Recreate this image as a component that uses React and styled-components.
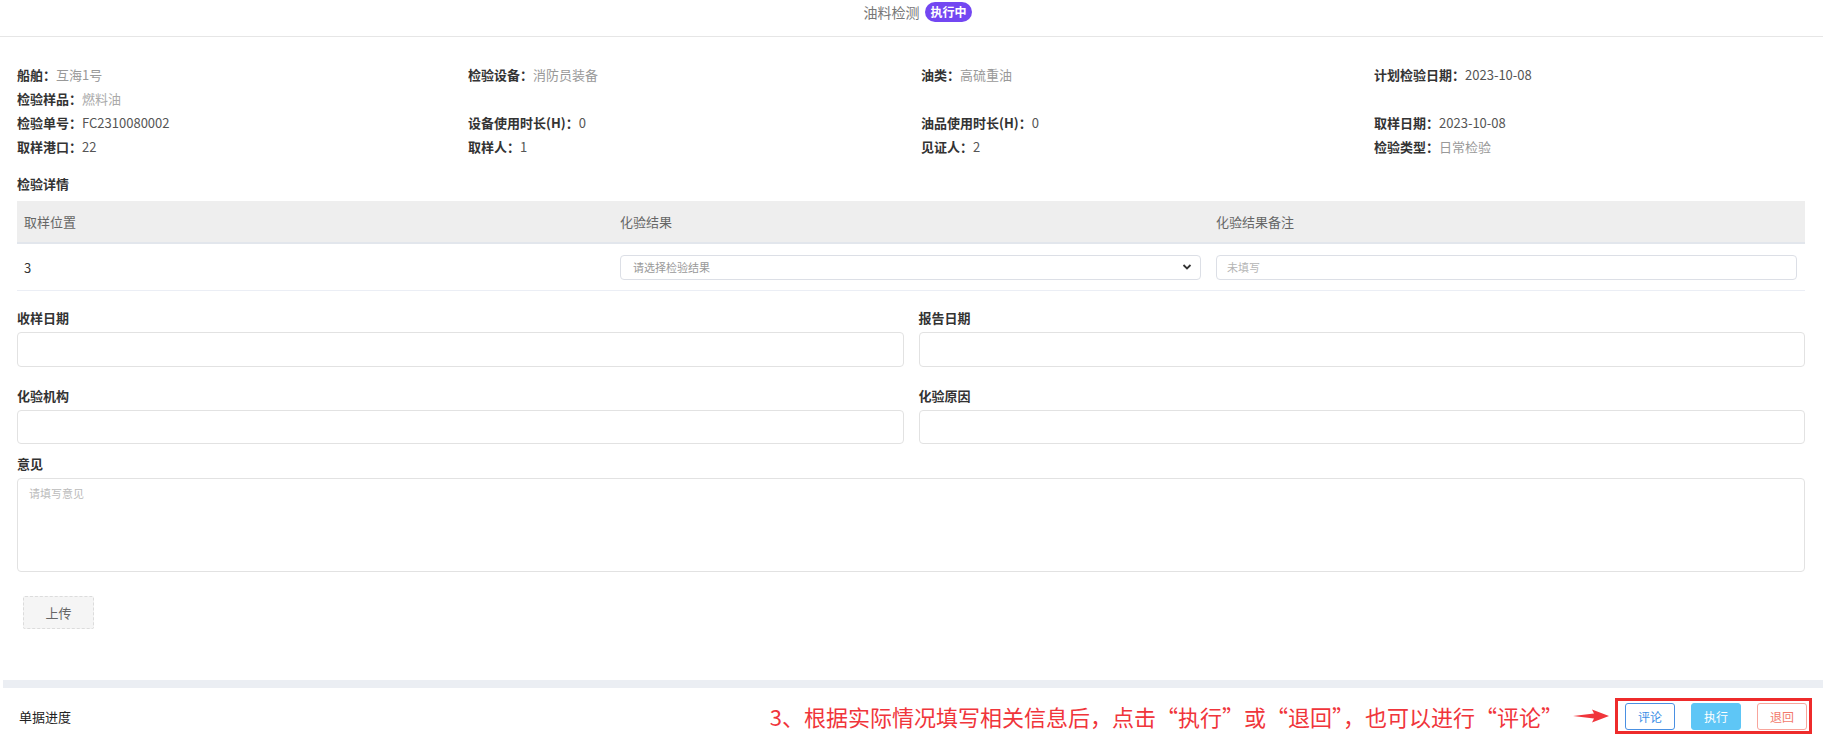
import React from 'react';
import styled, { createGlobalStyle } from 'styled-components';

const GlobalStyle = createGlobalStyle`
  html, body {
    margin: 0;
    padding: 0;
    background: #fff;
    font-family: "Noto Sans CJK SC", "Noto Sans", "Liberation Sans", sans-serif;
  }
`;

const infoRows = [
  [
    { label: '船舶', value: '互海1号', tone: 'muted' },
    { label: '检验设备', value: '消防员装备', tone: 'muted' },
    { label: '油类', value: '高硫重油', tone: 'muted' },
    { label: '计划检验日期', value: '2023-10-08', tone: 'dark' }
  ],
  [{ label: '检验样品', value: '燃料油', tone: 'light' }],
  [
    { label: '检验单号', value: 'FC2310080002', tone: 'dark' },
    { label: '设备使用时长(H)', value: '0', tone: 'dark' },
    { label: '油品使用时长(H)', value: '0', tone: 'dark' },
    { label: '取样日期', value: '2023-10-08', tone: 'dark' }
  ],
  [
    { label: '取样港口', value: '22', tone: 'dark' },
    { label: '取样人', value: '1', tone: 'dark' },
    { label: '见证人', value: '2', tone: 'dark' },
    { label: '检验类型', value: '日常检验', tone: 'muted' }
  ]
];

const toneColors = {
  muted: '#999',
  light: '#aaa',
  dark: '#555'
};

const App = () => {
  return (
    <Page>
      <GlobalStyle />
      <Header>
        <HeaderTitle>油料检测</HeaderTitle>
        <StatusBadge>执行中</StatusBadge>
      </Header>

      <Content>
        <InfoBlock>
          {infoRows.map((row, rIdx) => (
            <InfoRow key={rIdx}>
              {row.map(item => (
                <InfoItem key={item.label}>
                  <InfoLabel>{item.label}：</InfoLabel>
                  <InfoValue tone={item.tone}>{item.value}</InfoValue>
                </InfoItem>
              ))}
            </InfoRow>
          ))}
        </InfoBlock>

        <SectionTitle>检验详情</SectionTitle>
        <Table>
          <HeadCell>取样位置</HeadCell>
          <HeadCell>化验结果</HeadCell>
          <HeadCell>化验结果备注</HeadCell>
          <BodyCell>3</BodyCell>
          <BodyCell>
            <SelectBox>
              <span>请选择检验结果</span>
              <svg width="10" height="10" viewBox="0 0 10 10">
                <path
                  d="M1.5 3 L5 6.5 L8.5 3"
                  fill="none"
                  stroke="#333"
                  strokeWidth="1.8"
                />
              </svg>
            </SelectBox>
          </BodyCell>
          <BodyCell>
            <SmallInput placeholder="未填写" />
          </BodyCell>
        </Table>

        <FormGrid>
          <Field>
            <FieldLabel>收样日期</FieldLabel>
            <FieldInput />
          </Field>
          <Field>
            <FieldLabel>报告日期</FieldLabel>
            <FieldInput />
          </Field>
          <Field>
            <FieldLabel>化验机构</FieldLabel>
            <FieldInput short />
          </Field>
          <Field>
            <FieldLabel>化验原因</FieldLabel>
            <FieldInput short />
          </Field>
        </FormGrid>

        <Field spaced>
          <FieldLabel>意见</FieldLabel>
          <Opinion placeholder="请填写意见" />
        </Field>

        <UploadBtn>上传</UploadBtn>
      </Content>

      <Divider />

      <Footer>
        <FooterTitle>单据进度</FooterTitle>
        <Annotation>
          <NoteText>
            3、根据实际情况填写相关信息后，点击“执行”或“退回”，也可以进行“评论”
          </NoteText>
          <svg width="36" height="16" viewBox="0 0 36 16">
            <polygon
              points="0,8 21,5.5 19,1.5 36,8 19,14.5 21,10.5"
              fill="#f0353b"
            />
          </svg>
          <HighlightBox>
            <ActionBtn kind="comment">评论</ActionBtn>
            <ActionBtn kind="run">执行</ActionBtn>
            <ActionBtn kind="back">退回</ActionBtn>
          </HighlightBox>
        </Annotation>
      </Footer>
    </Page>
  );
};

const Page = styled.div`
  width: 1823px;
  height: 744px;
  overflow: hidden;
  font-size: 13px;
  color: #333;
`;

const Header = styled.div`
  height: 37px;
  border-bottom: 1px solid #e6e6e6;
  display: flex;
  justify-content: center;
  align-items: flex-start;
  padding: 2px 0 0 12px;
  box-sizing: border-box;
  gap: 6px;
`;

const HeaderTitle = styled.span`
  font-size: 14px;
  line-height: 20px;
  color: #777;
`;

const StatusBadge = styled.span`
  height: 20px;
  line-height: 20px;
  padding: 0 5px;
  border-radius: 10px;
  background: #7347f2;
  color: #fff;
  font-size: 12px;
  font-weight: 700;
`;

const Content = styled.div`
  padding: 25px 18px 0 17px;
`;

const InfoBlock = styled.div`
  display: flex;
  flex-direction: column;
`;

const InfoRow = styled.div`
  display: grid;
  grid-template-columns: 451px 453px 453px 1fr;
  height: 24px;
  align-items: center;
`;

const InfoItem = styled.div`
  display: flex;
  align-items: center;
  white-space: nowrap;
`;

const InfoLabel = styled.span`
  font-weight: 700;
  color: #333;
`;

const InfoValue = styled.span`
  color: ${p => toneColors[p.tone]};
`;

const SectionTitle = styled.div`
  margin-top: 14px;
  line-height: 24px;
  font-weight: 700;
`;

const Table = styled.div`
  margin-top: 5px;
  display: grid;
  grid-template-columns: repeat(3, 1fr);
  grid-template-rows: 43px 47px;
`;

const HeadCell = styled.div`
  background: #eeeeee;
  border-bottom: 2px solid #e2e6ec;
  display: flex;
  align-items: center;
  padding: 0 8px 0 7px;
  color: #666;
`;

const BodyCell = styled.div`
  border-bottom: 1px solid #ebeef5;
  display: flex;
  align-items: center;
  padding: 0 8px 0 7px;
  color: #333;
`;

const SelectBox = styled.div`
  flex: 1;
  height: 25px;
  box-sizing: border-box;
  border: 1px solid #dcdfe6;
  border-radius: 4px;
  display: flex;
  align-items: center;
  justify-content: space-between;
  padding: 0 8px 0 12px;
  font-size: 11px;
  color: #999;
`;

const SmallInput = styled.input`
  flex: 1;
  height: 25px;
  box-sizing: border-box;
  border: 1px solid #dcdfe6;
  border-radius: 4px;
  padding: 0 10px;
  font-family: inherit;
  font-size: 11px;
  outline: none;
  &::placeholder {
    color: #b5b5b5;
  }
`;

const FormGrid = styled.div`
  display: grid;
  grid-template-columns: 1fr 1fr;
  column-gap: 15px;
  margin-top: 17px;
  row-gap: 19px;
`;

const Field = styled.div`
  display: flex;
  flex-direction: column;
  gap: 4px;
  margin-top: ${p => (p.spaced ? '10px' : '0')};
`;

const FieldLabel = styled.div`
  line-height: 20px;
  font-weight: 700;
  color: #333;
`;

const FieldInput = styled.div`
  height: ${p => (p.short ? '34px' : '35px')};
  box-sizing: border-box;
  border: 1px solid #e2e2e2;
  border-radius: 4px;
`;

const Opinion = styled.textarea`
  height: 94px;
  box-sizing: border-box;
  border: 1px solid #e2e2e2;
  border-radius: 4px;
  padding: 6px 11px;
  resize: none;
  font-family: inherit;
  font-size: 11px;
  outline: none;
  &::placeholder {
    color: #bbb;
  }
`;

const UploadBtn = styled.div`
  margin: 24px 0 0 6px;
  width: 71px;
  height: 33px;
  box-sizing: border-box;
  border: 1px dashed #dcdcdc;
  border-radius: 2px;
  background: #f5f5f5;
  display: flex;
  align-items: center;
  justify-content: center;
  color: #666;
`;

const Divider = styled.div`
  margin: 51px 0 0 3px;
  height: 8px;
  background: #ebeef3;
`;

const Footer = styled.div`
  display: flex;
  align-items: center;
  height: 56px;
  padding: 0 11px 0 19px;
`;

const FooterTitle = styled.div`
  font-size: 13px;
  font-weight: 400;
  color: #222;
`;

const Annotation = styled.div`
  margin-left: auto;
  display: flex;
  align-items: center;
  gap: 6px;
`;

const NoteText = styled.span`
  font-size: 22px;
  color: #f0353b;
  white-space: nowrap;
  margin-right: 4px;
`;

const HighlightBox = styled.div`
  display: flex;
  align-items: center;
  gap: 16px;
  width: 197px;
  height: 36px;
  box-sizing: border-box;
  border: 3px solid #ee2b2b;
  padding-left: 7px;
`;

const btnStyles = {
  comment: 'background:#fff;border:1px solid #4a90e2;color:#3a8ee6;',
  run: 'background:#5ec6f6;border:1px solid #5ec6f6;color:#fff;',
  back: 'background:#fff;border:1px solid #f8a59c;color:#f27a6c;'
};

const ActionBtn = styled.div`
  width: 50px;
  height: 27px;
  box-sizing: border-box;
  border-radius: 3px;
  display: flex;
  align-items: center;
  justify-content: center;
  font-size: 12px;
  ${p => btnStyles[p.kind]}
`;

export default App;
